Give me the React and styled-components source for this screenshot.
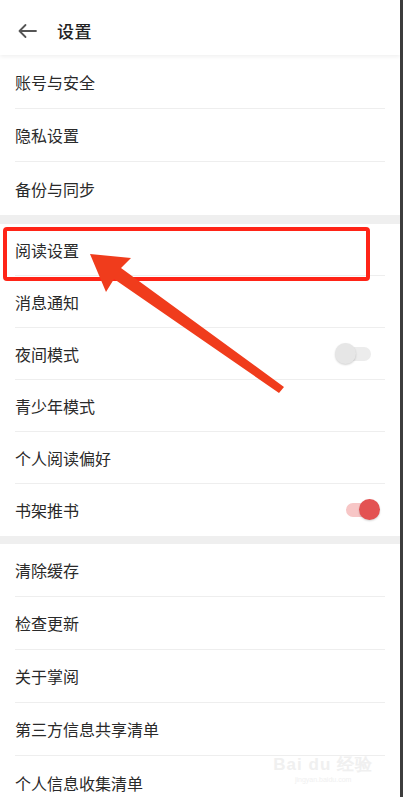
import React from 'react'
import styled, { createGlobalStyle } from 'styled-components'

const GlobalStyle = createGlobalStyle`
    html, body {
        margin: 0;
        padding: 0;
        background: #fff;
    }
    body {
        font-family: "Noto Sans CJK SC", "Noto Sans", sans-serif;
    }
`

const Frame = styled.div`
    position: relative;
    width: 403px;
    height: 797px;
    overflow: hidden;
    display: flex;
    align-items: flex-start;
    background: #fff;
`

const Screen = styled.div`
    width: 400px;
    display: flex;
    flex-direction: column;
    flex-shrink: 0;
`

const EdgeStrip = styled.div`
    width: 3px;
    height: 797px;
    background: #3d3d3d;
`

const Header = styled.div`
    height: 55px;
    flex-shrink: 0;
    display: flex;
    align-items: center;
    padding: 6px 0 0 17px;
    box-sizing: border-box;
    gap: 20px;
    box-shadow: 0 2px 4px rgba(0, 0, 0, 0.06);
    position: relative;
    z-index: 1;
`

const Title = styled.div`
    font-size: 17px;
    color: #222;
    font-weight: 500;
    letter-spacing: 0.5px;
`

const Section = styled.div`
    display: flex;
    flex-direction: column;
    flex-shrink: 0;
`

const Gap = styled.div`
    height: ${props => props.h || 8}px;
    flex-shrink: 0;
    background: #efefef;
`

const Row = styled.div`
    height: ${props => props.h}px;
    flex-shrink: 0;
    margin: 0 15px;
    display: flex;
    align-items: center;
    justify-content: space-between;
    border-bottom: ${props => props.last ? 'none' : '1px solid #eeeeee'};
    box-sizing: border-box;
    font-size: 16px;
    color: #2a2a2a;
`

const Track = styled.div`
    position: relative;
    width: 25px;
    height: 14px;
    border-radius: 7px;
    margin-right: 14px;
    background: ${props => props.on ? '#f7c6c6' : '#ececec'};
`

const Knob = styled.div`
    position: absolute;
    top: -4px;
    left: ${props => props.on ? '13px' : '-11px'};
    width: 21px;
    height: 21px;
    border-radius: 50%;
    background: ${props => props.on ? '#e35252' : '#e6e6e6'};
    box-shadow: 0 1px 2px rgba(0, 0, 0, 0.18);
`

const Highlight = styled.div`
    position: absolute;
    left: 3px;
    top: 227px;
    width: 367px;
    height: 54px;
    border: 4px solid #ff2417;
    border-radius: 4px;
    box-sizing: border-box;
`

const Pointer = styled.svg`
    position: absolute;
    left: 0;
    top: 0;
`

const Watermark = styled.div`
    position: absolute;
    right: 30px;
    bottom: 14px;
    color: #f0f0f0;
    font-family: "Liberation Sans", sans-serif;
    text-align: center;
    line-height: 1;
`

const MarkBig = styled.div`
    font-size: 17px;
    font-weight: bold;
    letter-spacing: 1px;
`

const MarkSmall = styled.div`
    font-size: 7px;
    margin-top: 3px;
`

function Toggle({ on }) {
    return (
        <Track on={on ? 1 : 0}>
            <Knob on={on ? 1 : 0} />
        </Track>
    )
}

const sections = [
    { rowH: 53, items: [{ label: '账号与安全' }, { label: '隐私设置' }, { label: '备份与同步' }] },
    {
        rowH: 52,
        items: [
            { label: '阅读设置' },
            { label: '消息通知' },
            { label: '夜间模式', toggle: 'off' },
            { label: '青少年模式' },
            { label: '个人阅读偏好' },
            { label: '书架推书', toggle: 'on' },
        ],
    },
    {
        rowH: 53,
        items: [
            { label: '清除缓存' },
            { label: '检查更新' },
            { label: '关于掌阅' },
            { label: '第三方信息共享清单' },
            { label: '个人信息收集清单' },
        ],
    },
]

export default function App() {
    return (
        <Frame>
            <GlobalStyle />
            <Screen>
                <Header>
                    <svg width="20" height="16" viewBox="0 0 20 16">
                        <path d="M19 8H2.5M8.5 2L2.5 8l6 6" fill="none" stroke="#555" strokeWidth="1.8" strokeLinecap="round" strokeLinejoin="round" />
                    </svg>
                    <Title>设置</Title>
                </Header>
                {sections.map((sec, i) => (
                    <React.Fragment key={i}>
                        {i > 0 && <Gap h={i === 1 ? 9 : 8} />}
                        <Section>
                            {sec.items.map((item, j) => (
                                <Row key={item.label} h={i === 0 && j === 0 ? sec.rowH + 1 : sec.rowH} last={j === sec.items.length - 1}>
                                    {item.label}
                                    {item.toggle && <Toggle on={item.toggle === 'on'} />}
                                </Row>
                            ))}
                        </Section>
                    </React.Fragment>
                ))}
            </Screen>
            <EdgeStrip />
            <Highlight />
            <Pointer width="403" height="797">
                <polygon points="90,254 131,258 121,268 284,387 279,393 114,279 106,292" fill="#f03c1c" />
            </Pointer>
            <Watermark>
                <MarkBig>Bai du 经验</MarkBig>
                <MarkSmall>jingyan.baidu.com</MarkSmall>
            </Watermark>
        </Frame>
    )
}
